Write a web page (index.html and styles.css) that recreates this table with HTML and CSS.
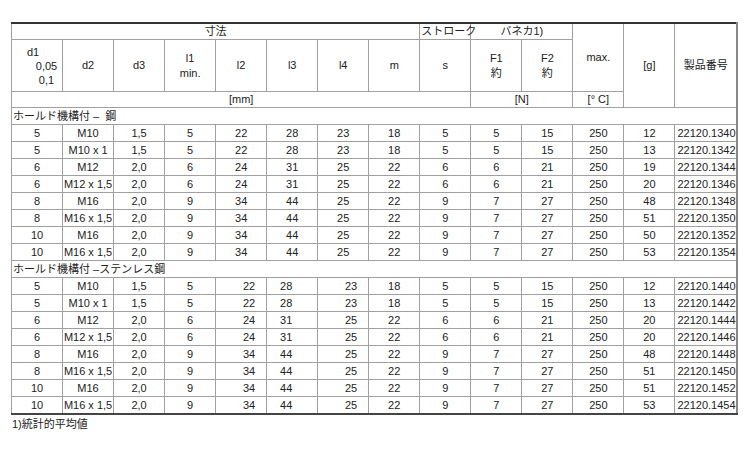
FILE: index.html
```html
<!DOCTYPE html>
<html lang="ja">
<head>
<meta charset="utf-8">
<title>ホールド機構付</title>
<link rel="stylesheet" href="styles.css">
</head>
<body>
<table class="spec">
  <colgroup>
    <col class="c"><col class="c"><col class="c"><col class="c"><col class="c"><col class="c"><col class="c">
    <col class="c"><col class="c"><col class="c"><col class="c"><col class="c"><col class="c"><col class="cw">
  </colgroup>
  <thead>
    <tr class="h1">
      <th colspan="8">寸法</th>
      <th class="tight">ストローク</th>
      <th colspan="2">バネカ1)</th>
      <th rowspan="2">max.</th>
      <th rowspan="3">[g]</th>
      <th rowspan="3">製品番号</th>
    </tr>
    <tr class="h2">
      <th><span class="d1">d1</span><span class="tol">0,05</span><span class="tol">0,1</span></th>
      <th>d2</th>
      <th>d3</th>
      <th>l1<br>min.</th>
      <th>l2</th>
      <th>l3</th>
      <th>l4</th>
      <th>m</th>
      <th>s</th>
      <th>F1<br>約</th>
      <th>F2<br>約</th>
    </tr>
    <tr class="h3">
      <th colspan="9">[mm]</th>
      <th colspan="2">[N]</th>
      <th>[°&nbsp;C]</th>
    </tr>
  </thead>
  <tbody>
    <tr class="sec"><td colspan="14">ホールド機構付 –&nbsp; 鋼</td></tr>
    <tr><td>5</td><td>M10</td><td>1,5</td><td>5</td><td>22</td><td>28</td><td>23</td><td>18</td><td>5</td><td>5</td><td>15</td><td>250</td><td>12</td><td class="no">22120.1340</td></tr>
    <tr><td>5</td><td>M10 x 1</td><td>1,5</td><td>5</td><td>22</td><td>28</td><td>23</td><td>18</td><td>5</td><td>5</td><td>15</td><td>250</td><td>13</td><td class="no">22120.1342</td></tr>
    <tr><td>6</td><td>M12</td><td>2,0</td><td>6</td><td>24</td><td>31</td><td>25</td><td>22</td><td>6</td><td>6</td><td>21</td><td>250</td><td>19</td><td class="no">22120.1344</td></tr>
    <tr><td>6</td><td>M12 x 1,5</td><td>2,0</td><td>6</td><td>24</td><td>31</td><td>25</td><td>22</td><td>6</td><td>6</td><td>21</td><td>250</td><td>20</td><td class="no">22120.1346</td></tr>
    <tr><td>8</td><td>M16</td><td>2,0</td><td>9</td><td>34</td><td>44</td><td>25</td><td>22</td><td>9</td><td>7</td><td>27</td><td>250</td><td>48</td><td class="no">22120.1348</td></tr>
    <tr><td>8</td><td>M16 x 1,5</td><td>2,0</td><td>9</td><td>34</td><td>44</td><td>25</td><td>22</td><td>9</td><td>7</td><td>27</td><td>250</td><td>51</td><td class="no">22120.1350</td></tr>
    <tr><td>10</td><td>M16</td><td>2,0</td><td>9</td><td>34</td><td>44</td><td>25</td><td>22</td><td>9</td><td>7</td><td>27</td><td>250</td><td>50</td><td class="no">22120.1352</td></tr>
    <tr><td>10</td><td>M16 x 1,5</td><td>2,0</td><td>9</td><td>34</td><td>44</td><td>25</td><td>22</td><td>9</td><td>7</td><td>27</td><td>250</td><td>53</td><td class="no">22120.1354</td></tr>
    <tr class="sec"><td colspan="14">ホールド機構付 –ステンレス鋼</td></tr>
    <tr><td>5</td><td>M10</td><td>1,5</td><td>5</td><td class="r">22</td><td class="sl">28</td><td class="r">23</td><td>18</td><td>5</td><td>5</td><td>15</td><td>250</td><td class="rg">12</td><td class="no">22120.1440</td></tr>
    <tr><td>5</td><td>M10 x 1</td><td>1,5</td><td>5</td><td class="r">22</td><td class="sl">28</td><td class="r">23</td><td>18</td><td>5</td><td>5</td><td>15</td><td>250</td><td class="rg">13</td><td class="no">22120.1442</td></tr>
    <tr><td>6</td><td>M12</td><td>2,0</td><td>6</td><td class="r">24</td><td class="sl">31</td><td class="r">25</td><td>22</td><td>6</td><td>6</td><td>21</td><td>250</td><td class="rg">20</td><td class="no">22120.1444</td></tr>
    <tr><td>6</td><td>M12 x 1,5</td><td>2,0</td><td>6</td><td class="r">24</td><td class="sl">31</td><td class="r">25</td><td>22</td><td>6</td><td>6</td><td>21</td><td>250</td><td class="rg">20</td><td class="no">22120.1446</td></tr>
    <tr><td>8</td><td>M16</td><td>2,0</td><td>9</td><td class="r">34</td><td class="sl">44</td><td class="r">25</td><td>22</td><td>9</td><td>7</td><td>27</td><td>250</td><td class="rg">48</td><td class="no">22120.1448</td></tr>
    <tr><td>8</td><td>M16 x 1,5</td><td>2,0</td><td>9</td><td class="r">34</td><td class="sl">44</td><td class="r">25</td><td>22</td><td>9</td><td>7</td><td>27</td><td>250</td><td class="rg">51</td><td class="no">22120.1450</td></tr>
    <tr><td>10</td><td>M16</td><td>2,0</td><td>9</td><td class="r">34</td><td class="sl">44</td><td class="r">25</td><td>22</td><td>9</td><td>7</td><td>27</td><td>250</td><td class="rg">51</td><td class="no">22120.1452</td></tr>
    <tr><td>10</td><td>M16 x 1,5</td><td>2,0</td><td>9</td><td class="r">34</td><td class="sl">44</td><td class="r">25</td><td>22</td><td>9</td><td>7</td><td>27</td><td>250</td><td class="rg">53</td><td class="no">22120.1454</td></tr>
  </tbody>
</table>
<p class="note">1)統計的平均値</p>
</body>
</html>
```

FILE: styles.css
```css
html, body {
  margin: 0;
  padding: 0;
  background: #ffffff;
}

body {
  padding: 22px 0 0 11px;
  font-family: "Liberation Sans", "Noto Sans CJK JP", sans-serif;
  font-size: 11px;
  color: #222222;
}

.spec {
  border-collapse: collapse;
  table-layout: fixed;
  width: 727px;
  border-top: 2px solid #333333;
  border-left: 1px solid #555555;
  border-right: 2px solid #888888;
  border-bottom: 2px solid #444444;
}

.c { width: 51px; }
.cw { width: 62px; }

.spec th,
.spec td {
  border: 1px solid #a0a0a0;
  padding: 0;
  font-weight: normal;
  text-align: center;
  vertical-align: middle;
  line-height: 15px;
  white-space: nowrap;
  overflow: visible;
}

.spec .h1 th { height: 15px; }
.spec .h2 th { height: 51px; }
.spec .h3 th { height: 15px; }

.spec th.tight { text-align: left; padding-left: 1px; }

.d1, .tol { display: block; line-height: 14px; }
.d1 { padding-right: 8px; }
.tol { padding-left: 19px; }

.spec tbody td { height: 16px; }

.spec tr.sec td {
  text-align: left;
  padding-left: 1px;
}

.spec td.no { text-align: left; padding-left: 2px; }
.spec td.r { text-align: right; padding-right: 11px; }
.spec td.sl { padding-right: 12px; }
.spec td.rg { text-align: right; padding-right: 19px; }

.note {
  margin: 2px 0 0 1px;
  line-height: 14px;
}
```
